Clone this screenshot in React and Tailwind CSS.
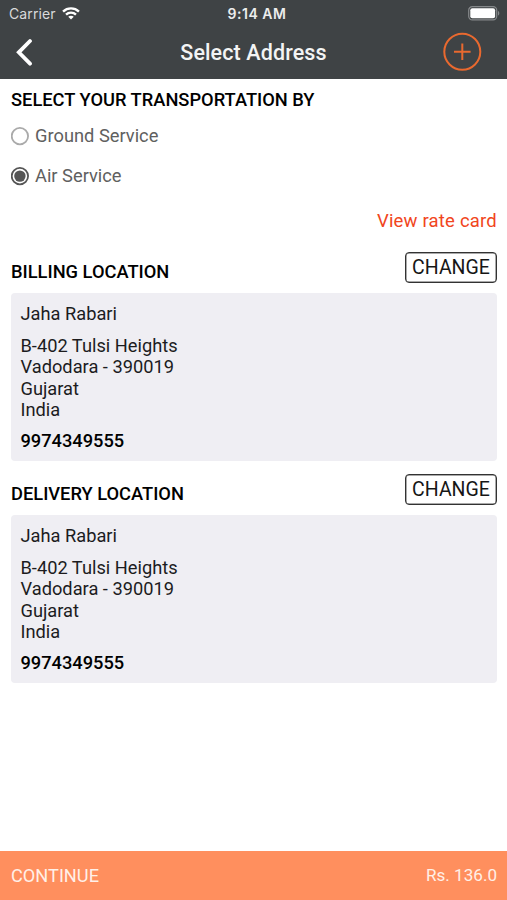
const FONT = "font-['Roboto','Liberation_Sans',sans-serif]";

function StatusBar() {
  return (
    <div className="flex h-[27px] items-center justify-between pl-[9px] pr-[7px] font-['Inter','Liberation_Sans',sans-serif]">
      <div className="flex w-[120px] items-center gap-[6px]">
        <span className="text-[14px] leading-[27px] tracking-[0.1px] text-[#d9dadb]">Carrier</span>
        <svg width="18" height="13" viewBox="0 0 17 13" preserveAspectRatio="none" fill="none" stroke="#fff" strokeWidth="2.2">
          <path d="M1 4.6C5.2 0.4 11.8 0.4 16 4.6" />
          <path d="M3.8 7.6C6.4 5 10.6 5 13.2 7.6" />
          <path d="M8.5 12.4L5.9 9.8C7.3 8.4 9.7 8.4 11.1 9.8Z" fill="#fff" stroke="none" />
        </svg>
      </div>
      <span className="pl-[5px] text-[14px] font-semibold leading-[27px] tracking-[0.5px] text-[#eceded]">9:14 AM</span>
      <div className="flex w-[120px] items-center justify-end">
        <svg width="32" height="15" viewBox="0 0 32 15">
          <rect x="0.7" y="0.7" width="28" height="13.2" rx="3.6" fill="none" stroke="#85888a" strokeWidth="1.2" />
          <rect x="2.3" y="2.3" width="24.8" height="10" rx="2" fill="#fff" />
          <path d="M30 5v4.6c1.8-.6 1.8-4 0-4.6Z" fill="#85888a" />
        </svg>
      </div>
    </div>
  );
}

function NavBar() {
  return (
    <div className="flex h-[52px] items-center justify-between pb-[2px] pl-[14px] pr-[25px]">
      <svg width="49" height="28" viewBox="0 0 49 28" fill="none" stroke="#fff" strokeWidth="3.8">
        <path d="M16 3L4.8 14.3L16 25.7" strokeLinecap="round" strokeLinejoin="miter" />
      </svg>
      <h1 className="pl-[2px] pt-px text-[21.5px] font-medium leading-[26px] tracking-[0.12px] text-[#f3f4f4]">Select Address</h1>
      <svg width="40" height="40" viewBox="0 0 40 40" fill="none" stroke="#e9692f" strokeWidth="2">
        <circle cx="20.3" cy="19.8" r="18" />
        <path d="M20.3 11.5v16.6M12 19.8h16.6" />
      </svg>
    </div>
  );
}

function RadioOption({ label, checked }) {
  return (
    <div className="flex h-10 items-center gap-[5px]">
      <svg width="19" height="19" viewBox="0 0 19 19" fill="none">
        <circle cx="8.9" cy="9.1" r="8.2" stroke={checked ? "#555" : "#aaa"} strokeWidth="1.8" />
        {checked && <circle cx="8.9" cy="9.1" r="5.7" fill="#555" />}
      </svg>
      <span className="text-[18.3px] leading-[22px] text-[#606060]">{label}</span>
    </div>
  );
}

function LocationSection({ title }) {
  return (
    <section className="mb-[13px]">
      <div className="flex h-[41px] justify-between">
        <h2 className="pt-[9px] text-[18.3px] font-medium leading-[22px]">{title}</h2>
        <button className="h-[31px] w-[92px] whitespace-nowrap rounded-[4px] border border-[#333] text-center text-[19.5px] leading-[30px] text-[#161616] ring-[0.5px] ring-inset ring-[#555]">
          CHANGE
        </button>
      </div>
      <div className="h-[168px] rounded-[4px] bg-[#efeef3] px-[9.5px] pt-[10px] text-[18.25px] leading-[21.5px] text-[#1c1c1e]">
        <p className="mb-[10px]">Jaha Rabari</p>
        <p>B-402 Tulsi Heights</p>
        <p>Vadodara - 390019</p>
        <p>Gujarat</p>
        <p>India</p>
        <p className="mt-[9.5px] font-medium text-black">9974349555</p>
      </div>
    </section>
  );
}

export default function App() {
  return (
    <div className={`flex h-[900px] w-[507px] flex-col overflow-hidden bg-white text-black ${FONT}`}>
      <header className="h-[79px] shrink-0 bg-[#3f4345]">
        <StatusBar />
        <NavBar />
      </header>
      <main className="flex-1 pl-[11px] pr-[10px]">
        <h2 className="pt-[10px] text-[18.3px] font-medium leading-[22px]">SELECT YOUR TRANSPORTATION BY</h2>
        <div className="pt-[5px]">
          <RadioOption label="Ground Service" />
          <RadioOption label="Air Service" checked />
        </div>
        <div className="flex h-[56px] justify-end pt-[14px]">
          <a className="text-[18.5px] leading-[22px] tracking-[0.2px] text-[#f14520]">View rate card</a>
        </div>
        <LocationSection title="BILLING LOCATION" />
        <LocationSection title="DELIVERY LOCATION" />
      </main>
      <footer className="flex h-[49px] shrink-0 items-center justify-between bg-[#ff8f5e] pl-[11px] pr-[10px] text-[#fff0e8]">
        <span className="text-[18.2px]">CONTINUE</span>
        <span className="pt-px text-[17.1px]">Rs. 136.0</span>
      </footer>
    </div>
  );
}
